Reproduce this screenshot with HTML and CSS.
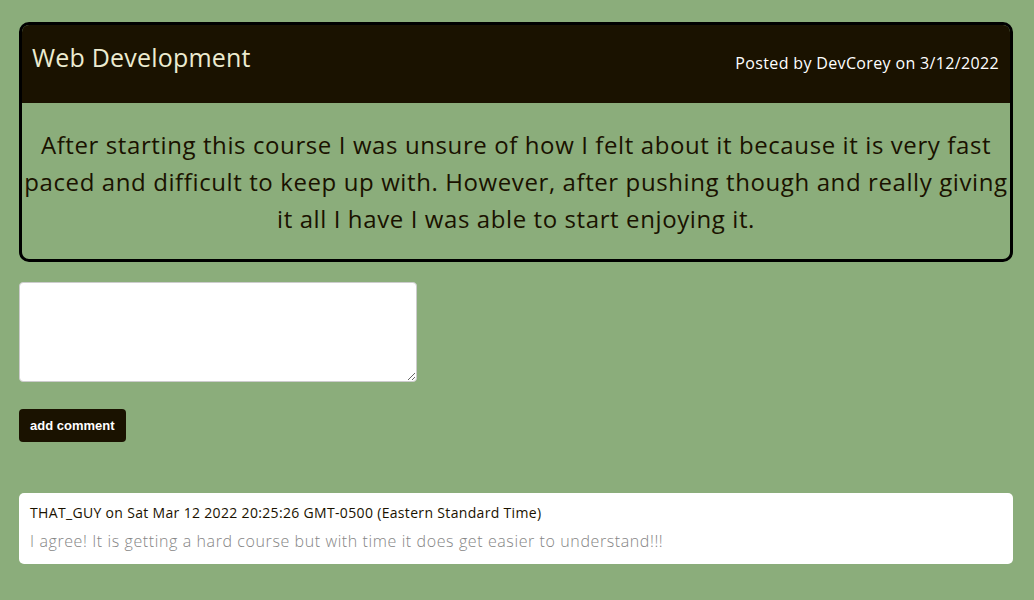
FILE: index.html
```html
<!DOCTYPE html>
<html>
<head>
<meta charset="utf-8">
<link rel="stylesheet" href="styles.css">
</head>
<body>
<main class="page">
  <article class="post">
    <header class="post-header">
      <h2 class="post-title">Web Development</h2>
      <p class="post-meta">Posted by DevCorey on 3/12/2022</p>
    </header>
    <div class="post-body">
      <p>After starting this course I was unsure of how I felt about it because it is very fast paced and difficult to keep up with. However, after pushing though and really giving it all I have I was able to start enjoying it.</p>
    </div>
  </article>
  <form class="comment-form">
    <textarea class="comment-input"></textarea>
    <button type="button" class="btn">add comment</button>
  </form>
  <section class="comments">
    <div class="comment">
      <p class="comment-meta">THAT_GUY on Sat Mar 12 2022 20:25:26 GMT-0500 (Eastern Standard Time)</p>
      <p class="comment-text">I agree! It is getting a hard course but with time it does get easier to understand!!!</p>
    </div>
  </section>
</main>
</body>
</html>
```
FILE: styles.css
```css
html, body {
  margin: 0;
  padding: 0;
  background: #8bad7b;
}
body {
  font-family: "Open Sans", "Noto Sans", sans-serif;
  color: #1a1200;
}
.page {
  padding: 22px 21px 0 19px;
}
.post {
  border: 3px solid #000;
  border-radius: 10px;
  overflow: hidden;
}
.post-header {
  background: #1a1200;
  height: 78px;
  display: flex;
  justify-content: space-between;
  align-items: center;
  padding: 0 11px 0 10px;
}
.post-title {
  margin: -14px 0 0;
  font-weight: 400;
  font-size: 25px;
  letter-spacing: 0.2px;
  color: #ecebd0;
}
.post-meta {
  margin: -2px 0 0;
  font-size: 16px;
  letter-spacing: 0.35px;
  color: #fff;
}
.post-body {
  padding: 23px 2px 22px;
  text-align: center;
}
.post-body p {
  margin: 0;
  font-size: 24px;
  letter-spacing: 0.6px;
  line-height: 37px;
}
.comment-form {
  display: flex;
  flex-direction: column;
  align-items: flex-start;
  margin-top: 20px;
}
.comment-input {
  width: 398px;
  height: 100px;
  box-sizing: border-box;
  border: 1px solid #ccc;
  border-radius: 4px;
  margin: 0;
}
.btn {
  margin-top: 27px;
  background: #1a1200;
  color: #fff;
  border: none;
  border-radius: 4px;
  height: 33px;
  padding: 0 11px;
  font-family: "Liberation Sans", Arial, sans-serif;
  font-weight: 700;
  font-size: 13px;
}
.comments {
  margin-top: 51px;
}
.comment {
  background: #fff;
  border-radius: 5px;
  padding: 9px 11px 12px;
}
.comment-meta {
  margin: 0;
  font-size: 14px;
  letter-spacing: 0.33px;
  line-height: 22px;
  color: #1a1200;
}
.comment-text {
  margin: 6px 0 0;
  font-size: 16px;
  font-weight: 300;
  letter-spacing: 0.6px;
  line-height: 22px;
  color: #858585;
}
```
